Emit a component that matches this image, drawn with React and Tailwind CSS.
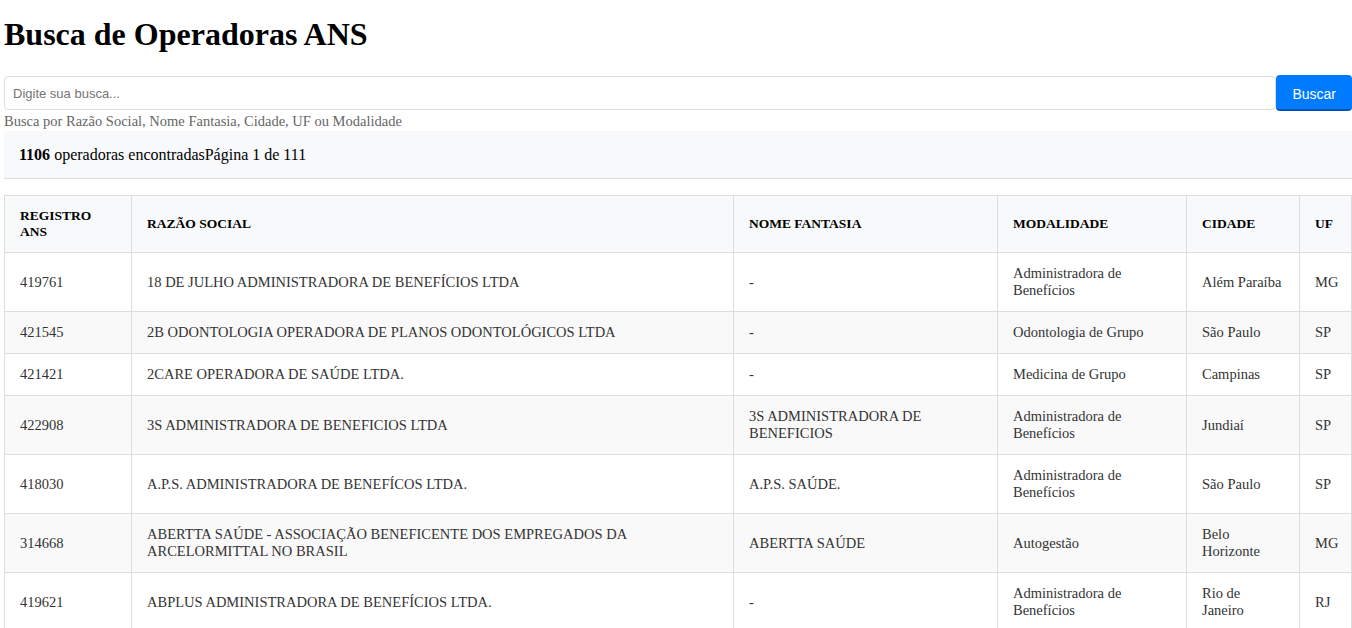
const rows = [
  { reg: "419761", razao: "18 DE JULHO ADMINISTRADORA DE BENEFÍCIOS LTDA", fantasia: "-", mod: "Administradora de Benefícios", cidade: "Além Paraíba", uf: "MG" },
  { reg: "421545", razao: "2B ODONTOLOGIA OPERADORA DE PLANOS ODONTOLÓGICOS LTDA", fantasia: "-", mod: "Odontologia de Grupo", cidade: "São Paulo", uf: "SP" },
  { reg: "421421", razao: "2CARE OPERADORA DE SAÚDE LTDA.", fantasia: "-", mod: "Medicina de Grupo", cidade: "Campinas", uf: "SP" },
  { reg: "422908", razao: "3S ADMINISTRADORA DE BENEFICIOS LTDA", fantasia: "3S ADMINISTRADORA DE BENEFICIOS", mod: "Administradora de Benefícios", cidade: "Jundiaí", uf: "SP" },
  { reg: "418030", razao: "A.P.S. ADMINISTRADORA DE BENEFÍCOS LTDA.", fantasia: "A.P.S. SAÚDE.", mod: "Administradora de Benefícios", cidade: "São Paulo", uf: "SP" },
  { reg: "314668", razao: "ABERTTA SAÚDE - ASSOCIAÇÃO BENEFICENTE DOS EMPREGADOS DA ARCELORMITTAL NO BRASIL", fantasia: "ABERTTA SAÚDE", mod: "Autogestão", cidade: "Belo Horizonte", uf: "MG" },
  { reg: "419621", razao: "ABPLUS ADMINISTRADORA DE BENEFÍCIOS LTDA.", fantasia: "-", mod: "Administradora de Benefícios", cidade: "Rio de Janeiro", uf: "RJ" },
];

const headers = ["Registro ANS", "Razão Social", "Nome Fantasia", "Modalidade", "Cidade", "UF"];

export default function App() {
  return (
    <div className="min-h-screen bg-white pl-1 font-['Liberation_Serif',serif] text-black">
      <h1 className="pt-4 text-[32px] font-bold leading-[36px]">Busca de Operadoras ANS</h1>

      <div className="mt-6 flex w-[1348px]">
        <input
          className="h-[34px] flex-1 rounded-[4px] border border-[#dddddd] px-2 font-['Liberation_Sans',sans-serif] text-[13px] outline-none placeholder:text-[#757575]"
          placeholder="Digite sua busca..."
        />
        <button className="-mt-px h-[36px] rounded-[4px] border-b-2 border-[#0056b3] bg-[#007bff] px-4 pt-[4px] font-['Liberation_Sans',sans-serif] text-[14px] text-white">
          Buscar
        </button>
      </div>
      <p className="text-[14.5px] leading-[20px] text-[#666666]">
        Busca por Razão Social, Nome Fantasia, Cidade, UF ou Modalidade
      </p>

      <div className="w-[1348px] border-b border-[#dddddd] bg-[#f8f9fa] px-[15px] pb-[14px] pt-[15px] text-[16px] leading-[18px]">
        <strong>1106</strong> operadoras encontradas<span>Página 1 de 111</span>
      </div>

      <table className="mt-4 w-[1348px] table-fixed border-collapse border border-[#dddddd] text-[14.5px] leading-[17px] text-[#333333]">
        <colgroup>
          <col className="w-[127px]" />
          <col className="w-[602px]" />
          <col className="w-[264px]" />
          <col className="w-[189px]" />
          <col className="w-[113px]" />
          <col />
        </colgroup>
        <thead>
          <tr className="bg-[#f8f9fa]">
            {headers.map((h) => (
              <th
                key={h}
                className="border border-[#dddddd] px-[15px] py-3 text-left align-middle text-[13.5px] font-bold uppercase leading-[16px] text-black"
              >
                {h}
              </th>
            ))}
          </tr>
        </thead>
        <tbody>
          {rows.map((r, i) => (
            <tr key={r.reg} className={i % 2 === 1 ? "bg-[#f9f9f9]" : "bg-white"}>
              <td className="border border-[#dddddd] px-[15px] py-3 align-middle">{r.reg}</td>
              <td className="border border-[#dddddd] px-[15px] py-3 align-middle">{r.razao}</td>
              <td className="border border-[#dddddd] px-[15px] py-3 align-middle">{r.fantasia}</td>
              <td className="border border-[#dddddd] px-[15px] py-3 align-middle">{r.mod}</td>
              <td className="border border-[#dddddd] px-[15px] py-3 align-middle">{r.cidade}</td>
              <td className="border border-[#dddddd] px-[15px] py-3 align-middle">{r.uf}</td>
            </tr>
          ))}
        </tbody>
      </table>
    </div>
  );
}
